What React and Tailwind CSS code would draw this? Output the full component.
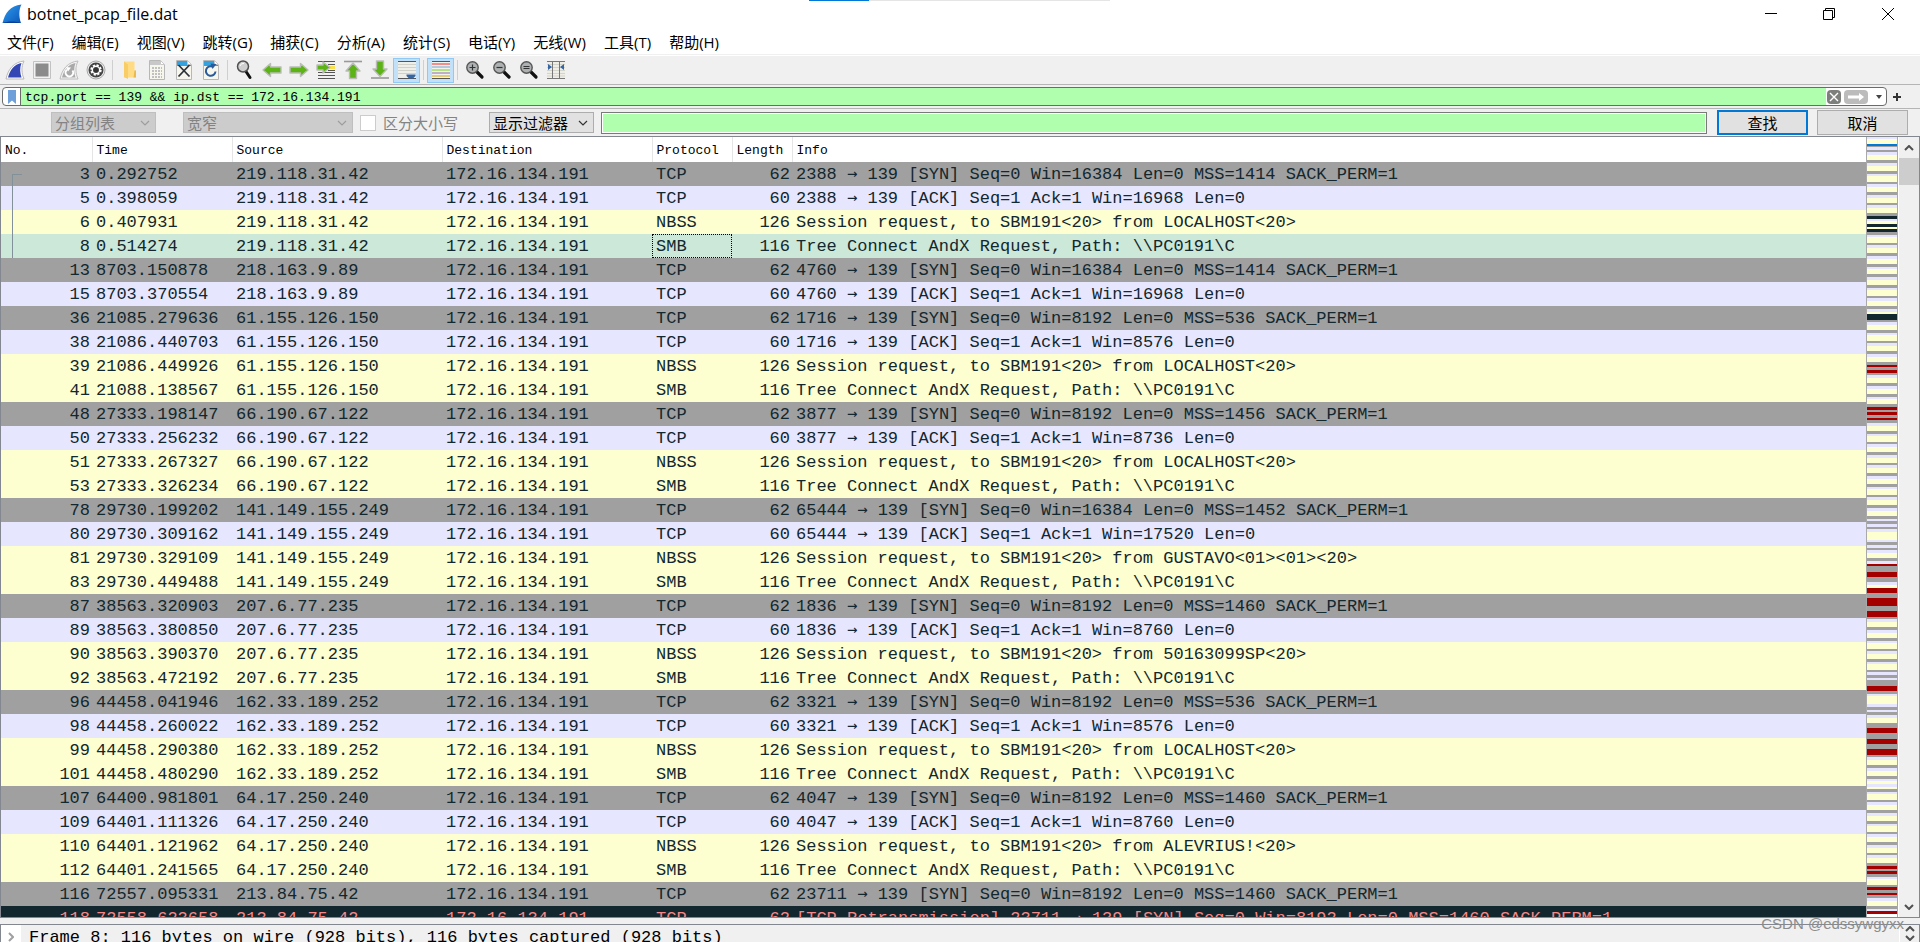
import React from 'react';
import clsx from 'clsx';

const MENUS = ['文件(F)', '编辑(E)', '视图(V)', '跳转(G)', '捕获(C)', '分析(A)', '统计(S)', '电话(Y)', '无线(W)', '工具(T)', '帮助(H)'];

const ROW_STYLES = {
  syn: 'bg-[#a0a0a0] text-[#12272e]',
  ack: 'bg-[#e7e6ff] text-[#12272e]',
  smb: 'bg-[#feffd0] text-[#12272e]',
  selected: 'bg-[#cce8d9] text-[#12272e]',
  bad: 'bg-[#12272e] text-[#f78787]',
};

const LOCALHOST = 'Session request, to SBM191<20> from LOCALHOST<20>';
const TREE = 'Tree Connect AndX Request, Path: \\\\PC0191\\C';

// [no, time, source, protocol, length, info, row style]
const PACKETS = [
  [3, '0.292752', '219.118.31.42', 'TCP', 62, '2388 → 139 [SYN] Seq=0 Win=16384 Len=0 MSS=1414 SACK_PERM=1', 'syn'],
  [5, '0.398059', '219.118.31.42', 'TCP', 60, '2388 → 139 [ACK] Seq=1 Ack=1 Win=16968 Len=0', 'ack'],
  [6, '0.407931', '219.118.31.42', 'NBSS', 126, LOCALHOST, 'smb'],
  [8, '0.514274', '219.118.31.42', 'SMB', 116, TREE, 'selected'],
  [13, '8703.150878', '218.163.9.89', 'TCP', 62, '4760 → 139 [SYN] Seq=0 Win=16384 Len=0 MSS=1414 SACK_PERM=1', 'syn'],
  [15, '8703.370554', '218.163.9.89', 'TCP', 60, '4760 → 139 [ACK] Seq=1 Ack=1 Win=16968 Len=0', 'ack'],
  [36, '21085.279636', '61.155.126.150', 'TCP', 62, '1716 → 139 [SYN] Seq=0 Win=8192 Len=0 MSS=536 SACK_PERM=1', 'syn'],
  [38, '21086.440703', '61.155.126.150', 'TCP', 60, '1716 → 139 [ACK] Seq=1 Ack=1 Win=8576 Len=0', 'ack'],
  [39, '21086.449926', '61.155.126.150', 'NBSS', 126, LOCALHOST, 'smb'],
  [41, '21088.138567', '61.155.126.150', 'SMB', 116, TREE, 'smb'],
  [48, '27333.198147', '66.190.67.122', 'TCP', 62, '3877 → 139 [SYN] Seq=0 Win=8192 Len=0 MSS=1456 SACK_PERM=1', 'syn'],
  [50, '27333.256232', '66.190.67.122', 'TCP', 60, '3877 → 139 [ACK] Seq=1 Ack=1 Win=8736 Len=0', 'ack'],
  [51, '27333.267327', '66.190.67.122', 'NBSS', 126, LOCALHOST, 'smb'],
  [53, '27333.326234', '66.190.67.122', 'SMB', 116, TREE, 'smb'],
  [78, '29730.199202', '141.149.155.249', 'TCP', 62, '65444 → 139 [SYN] Seq=0 Win=16384 Len=0 MSS=1452 SACK_PERM=1', 'syn'],
  [80, '29730.309162', '141.149.155.249', 'TCP', 60, '65444 → 139 [ACK] Seq=1 Ack=1 Win=17520 Len=0', 'ack'],
  [81, '29730.329109', '141.149.155.249', 'NBSS', 126, 'Session request, to SBM191<20> from GUSTAVO<01><01><20>', 'smb'],
  [83, '29730.449488', '141.149.155.249', 'SMB', 116, TREE, 'smb'],
  [87, '38563.320903', '207.6.77.235', 'TCP', 62, '1836 → 139 [SYN] Seq=0 Win=8192 Len=0 MSS=1460 SACK_PERM=1', 'syn'],
  [89, '38563.380850', '207.6.77.235', 'TCP', 60, '1836 → 139 [ACK] Seq=1 Ack=1 Win=8760 Len=0', 'ack'],
  [90, '38563.390370', '207.6.77.235', 'NBSS', 126, 'Session request, to SBM191<20> from 50163099SP<20>', 'smb'],
  [92, '38563.472192', '207.6.77.235', 'SMB', 116, TREE, 'smb'],
  [96, '44458.041946', '162.33.189.252', 'TCP', 62, '3321 → 139 [SYN] Seq=0 Win=8192 Len=0 MSS=536 SACK_PERM=1', 'syn'],
  [98, '44458.260022', '162.33.189.252', 'TCP', 60, '3321 → 139 [ACK] Seq=1 Ack=1 Win=8576 Len=0', 'ack'],
  [99, '44458.290380', '162.33.189.252', 'NBSS', 126, LOCALHOST, 'smb'],
  [101, '44458.480290', '162.33.189.252', 'SMB', 116, TREE, 'smb'],
  [107, '64400.981801', '64.17.250.240', 'TCP', 62, '4047 → 139 [SYN] Seq=0 Win=8192 Len=0 MSS=1460 SACK_PERM=1', 'syn'],
  [109, '64401.111326', '64.17.250.240', 'TCP', 60, '4047 → 139 [ACK] Seq=1 Ack=1 Win=8760 Len=0', 'ack'],
  [110, '64401.121962', '64.17.250.240', 'NBSS', 126, 'Session request, to SBM191<20> from ALEVRIUS!<20>', 'smb'],
  [112, '64401.241565', '64.17.250.240', 'SMB', 116, TREE, 'smb'],
  [116, '72557.095331', '213.84.75.42', 'TCP', 62, '23711 → 139 [SYN] Seq=0 Win=8192 Len=0 MSS=1460 SACK_PERM=1', 'syn'],
  [118, '72558.623658', '213.84.75.42', 'TCP', 62, '[TCP Retransmission] 23711 → 139 [SYN] Seq=0 Win=8192 Len=0 MSS=1460 SACK_PERM=1', 'bad'],
];

const COLUMNS = ['No.', 'Time', 'Source', 'Destination', 'Protocol', 'Length', 'Info'];

// Colour letter + height in pixels, top to bottom
const MINIMAP = (
  'L2 Y5 B2 G1 L3 G2 L3 Y5 G3 L3 Y5 G3 L2 Y6 G2 L3 Y5 G3 L3 Y5 G2 L3 Y5 G3 D3 L2 Y3 D3 Y2 D3 G3 L2 Y6 G2 L3 Y5 G3 L3 Y5 G3 L2 Y5 G3 L3 Y5 G3 ' +
  'L2 Y6 G2 L3 Y5 G3 L3 Y2 D6 G2 L3 Y5 G3 L2 Y6 G2 L3 Y5 G3 L3 Y5 G3 R2 G3 R3 G2 L3 Y5 G3 L3 Y5 G3 L2 Y5 G3 R3 G2 R3 G3 R2 G3 L3 Y5 G3 L2 Y6 G2 ' +
  'L3 Y5 G3 L3 Y5 G2 L3 Y5 G3 L3 Y5 G3 L2 Y6 G2 L3 Y5 G3 L3 Y5 G3 L2 G3 L3 G2 L3 Y8 L2 G3 L3 G2 L3 Y5 G3 L3 R2 G6 R5 G5 L3 Y3 R5 G5 R8 G5 R6 G2 ' +
  'L3 Y5 G3 L3 Y5 G3 L2 Y6 G2 L3 Y5 G3 L2 Y6 G2 L3 G3 L2 G6 R5 G3 L2 Y8 L3 G3 L2 G3 L3 Y5 G5 R5 G6 R5 G5 R6 G2 L3 Y5 G3 L3 Y5 G3 L2 Y3 L3 Y2 G3 ' +
  'L2 Y6 G2 L3 Y5 G3 L3 Y5 G3 L2 Y6 G2 L3 Y5 G3 L3 Y5 G2 L3 Y5 G3 R3 G2 R3 G3 L2 Y6 G2 R3 G3 R2 G3 L3 Y5 G3 L2 R3 W3'
).split(' ');

const MAP_COLORS = {
  L: 'bg-[#e7e6ff]',
  Y: 'bg-[#feffd0]',
  G: 'bg-[#a0a0a0]',
  B: 'bg-[#0078d7]',
  D: 'bg-[#12272e]',
  R: 'bg-[#a40000]',
  W: 'bg-white',
};

/* ---------- icons ---------- */

const Svg = ({ children, size = 20 }) => (
  <svg width={size} height={size} viewBox="0 0 20 20" fill="none" aria-hidden="true">{children}</svg>
);

const AppLogo = () => (
  <Svg>
    <defs>
      <linearGradient id="logo" x1="0" y1="0" x2="1" y2="1">
        <stop offset="0" stopColor="#2f9df0" />
        <stop offset="1" stopColor="#0b56b8" />
      </linearGradient>
    </defs>
    <path d="M.5 19C3 9 8 1.500 19.500.5C17 5 16.500 12 19 19Z" fill="url(#logo)" />
    <path d="M.5 19C6 17 13 17 19 19Z" fill="#0a3f94" />
  </Svg>
);

const FinIcon = () => (
  <Svg>
    <path d="M1 19C3 9 9 2 19 1C16 7 16.500 13 19 19Z" fill="#fff" stroke="#b9b9b9" />
    <path d="M3 17.500C5 10 9 4.500 16.500 3C14.500 8 15 13 16.500 17.500Z" fill="#3346b4" />
  </Svg>
);

const StopIcon = () => (
  <Svg>
    <path d="M1.500 1.500h17v17h-17z" fill="#f2f2f2" stroke="#c2c2c2" />
    <path d="M3.500 3.500h13v13h-13z" fill="#8b8b8b" />
  </Svg>
);

const RestartIcon = () => (
  <Svg>
    <path d="M1 19C3 9 9 2 19 1C16 7 16.500 13 19 19Z" fill="#f4f4f4" stroke="#bcbcbc" />
    <path d="M3 17.500C5 10 9 4.500 16.500 3C14.500 8 15 13 16.500 17.500Z" fill="#a9a9a9" />
    <path d="M13.500 10.500a3.800 3.800 0 1 1-5.500-.8" stroke="#fff" strokeWidth="2" />
    <path d="M7 7l5 .5-3 4z" fill="#fff" />
  </Svg>
);

const OptionsIcon = () => (
  <Svg>
    <circle cx="10" cy="10" r="9" fill="#e9e9e9" stroke="#a9a9a9" />
    <circle cx="10" cy="10" r="7.500" fill="#444" />
    <circle cx="10" cy="10" r="4.800" stroke="#fff" strokeWidth="1.800" strokeDasharray="2.200 1.570" />
    <circle cx="10" cy="10" r="3.700" stroke="#fff" strokeWidth="1.400" />
    <circle cx="10" cy="10" r="2.200" fill="#333" />
  </Svg>
);

const FolderIcon = () => (
  <Svg>
    <path d="M4 1.500h10.500v9H16v7H4z" fill="#ffdc83" />
    <path d="M4 1.500l4 3V19l-4-2z" fill="#f8cd66" />
    <path d="M14.500 10.500H16v7h-2.500z" fill="#eab94b" />
  </Svg>
);

const Page = ({ gray, children }) => (
  <Svg>
    <path d="M2.500.5h11l4 4v15h-15z" fill="#f7f6ec" stroke="#b7b7b7" />
    {!gray && <path d="M3 1h10.500L17 4.500V6H3z" fill="#35a2dd" />}
    <path d="M13.500.5v4h4z" fill="#fff" stroke="#c9c9c9" />
    {children}
  </Svg>
);

const SaveIcon = () => (
  <Page gray>
    <path d="M3 1h10v4H3z" fill="#c8c8c8" />
    <path d="M5 8h10M5 11h10M5 14h10M5 17h10" stroke="#c0c0c0" strokeWidth="2" strokeDasharray="2 1" />
  </Page>
);
const CloseFileIcon = () => (
  <Page>
    <path d="M4.500 5l11 11.500M15.500 5l-11 11.500" stroke="#2c333a" strokeWidth="1.800" />
  </Page>
);
const ReloadIcon = () => (
  <Page>
    <path d="M14.500 11.500a4.800 4.800 0 1 1-3-5" stroke="#285a9c" strokeWidth="2" />
    <path d="M9.500 3.500l6 .5-4 5z" fill="#285a9c" />
  </Page>
);

const Lens = ({ children, fill = '#aeb1b2' }) => (
  <Svg>
    <path d="M11.500 11.500l5.500 5.500" stroke="#111" strokeWidth="3.200" strokeLinecap="round" />
    <circle cx="7.500" cy="7.500" r="5.700" fill={fill} stroke="#555" strokeWidth="1.400" />
    {children}
  </Svg>
);
const FindIcon = () => (
  <Svg>
    <path d="M11 11.500l4 6" stroke="#111" strokeWidth="3" strokeLinecap="round" />
    <circle cx="8" cy="6.500" r="5.500" fill="#cfcfcf" stroke="#505050" strokeWidth="1.500" />
    <path d="M5 6a3.500 3.500 0 0 1 4-2.500" stroke="#fff" />
  </Svg>
);

const GREEN = { fill: '#5cb316', stroke: '#b9bdb5', strokeWidth: 1.4, strokeLinejoin: 'round' };

const BackIcon = () => <Svg><path d="M1 10L8.500 3.500V7H19v6H8.500v3.500z" {...GREEN} /></Svg>;
const ForwardIcon = () => <Svg><path d="M19 10l-7.500-6.500V7H1v6h10.500v3.500z" {...GREEN} /></Svg>;
const GotoIcon = () => (
  <Svg>
    <path d="M2 1.500h17M2 12.500h17M2 15.500h17M2 18.500h17M12 4.500h7M12 10.500h7" stroke="#555" />
    <path d="M13 6h6v3h-6z" fill="#f8e04a" />
    <path d="M1 5h6V2l7 5.500L7 13v-3H1z" {...GREEN} />
  </Svg>
);
const FirstIcon = () => (
  <Svg>
    <path d="M1 1.500h18" stroke="#999" strokeWidth="1.600" />
    <path d="M10 3l7 8h-3.500v7.500h-7V11H3z" {...GREEN} />
  </Svg>
);
const LastIcon = () => (
  <Svg>
    <path d="M1 18h18" stroke="#999" strokeWidth="1.600" />
    <path d="M10 16.500l7-7.500h-3.500V1h-7v8H3z" {...GREEN} />
  </Svg>
);
const AutoScrollIcon = () => (
  <Svg>
    <path d="M1 1h18v18H1z" fill="#eeefe9" />
    <path d="M1 1.500h18M1 18.500h18" stroke="#555" />
    <path d="M1 4.500h18M1 7.500h18M1 10.500h18M1 13.500h18" stroke="#d0d1c8" />
    <path d="M9.500 14.500h9v1.500l-2.500 2.500h-4L9.500 16z" fill="#3465a4" />
  </Svg>
);
const ColorizeIcon = () => (
  <Svg>
    <path d="M1 1h18v18H1z" fill="#f3f3ee" />
    <path d="M1 1.500h18M1 18.500h18" stroke="#555" />
    <path d="M1 4h18" stroke="#ef2929" />
    <path d="M1 7h18" stroke="#729fcf" />
    <path d="M1 10h18" stroke="#73d216" />
    <path d="M1 13h18" stroke="#8e6a9c" />
    <path d="M1 16h18" stroke="#d9a400" />
  </Svg>
);
const ZoomInIcon = () => <Lens><path d="M4.500 7.500h6M7.500 4.500v6" stroke="#333" strokeWidth="1.200" /></Lens>;
const ZoomOutIcon = () => <Lens><path d="M4.500 7.500h6" stroke="#333" strokeWidth="1.200" /></Lens>;
const ZoomResetIcon = () => <Lens><path d="M4.500 6.500h6M4.500 8.500h6" stroke="#333" strokeWidth="1.200" /></Lens>;
const ResizeIcon = () => (
  <Svg>
    <path d="M1 1h18v18H1z" fill="#eeeee6" />
    <path d="M1 1.500h18M1 18.500h18" stroke="#777" />
    <path d="M1 4.500h18M1 7.500h18M1 10.500h18M1 13.500h18M1 16h18" stroke="#d3d4cc" />
    <path d="M6.500 1v18M13.500 1v18" stroke="#777" />
    <path d="M2 4l4 3-4 3zM18 4l-4 3 4 3z" fill="#3465a4" />
  </Svg>
);

const Chevron = ({ className, up, bold }) => (
  <svg width="10" height="6" viewBox="0 0 10 6" fill="none" className={className} aria-hidden="true">
    <path d={up ? 'M1 5l4-4 4 4' : 'M1 1l4 4 4-4'} stroke="currentColor" strokeWidth={bold ? 2 : 1.2} />
  </svg>
);

/* ---------- parts ---------- */

const TOOL_GROUPS = [
  [['开始捕获', FinIcon], ['停止捕获', StopIcon], ['重新开始', RestartIcon], ['捕获选项', OptionsIcon]],
  [['打开', FolderIcon], ['保存', SaveIcon], ['关闭文件', CloseFileIcon], ['重新加载', ReloadIcon]],
  [['查找分组', FindIcon], ['上一分组', BackIcon], ['下一分组', ForwardIcon], ['转到分组', GotoIcon], ['首个分组', FirstIcon], ['最新分组', LastIcon], ['自动滚动', AutoScrollIcon, true]],
  [['着色', ColorizeIcon, true]],
  [['放大', ZoomInIcon], ['缩小', ZoomOutIcon], ['原始大小', ZoomResetIcon], ['调整列宽', ResizeIcon]],
];

const TitleBar = () => (
  <header className="flex h-7 items-center justify-between bg-white">
    <div className="flex items-center gap-[5px] pl-0.5">
      <AppLogo />
      <h1 className="font-['Open_Sans',sans-serif] text-base leading-7 text-black">botnet_pcap_file.dat</h1>
    </div>
    <div className="flex pr-0.5 text-black">
      <button aria-label="最小化" className="flex h-7 w-[58px] items-center justify-center">
        <svg width="12" height="12" viewBox="0 0 12 12"><path d="M0 5.500h12" stroke="#000" /></svg>
      </button>
      <button aria-label="还原" className="flex h-7 w-[58px] items-center justify-center">
        <svg width="12" height="12" viewBox="0 0 12 12" fill="none"><path d="M.5 2.500h9v9h-9zM2.500 2.500v-2h9v9h-2" stroke="#000" /></svg>
      </button>
      <button aria-label="关闭" className="flex h-7 w-[60px] items-center justify-center">
        <svg width="12" height="12" viewBox="0 0 12 12" fill="none"><path d="M0 0l12 12M12 0L0 12" stroke="#000" /></svg>
      </button>
    </div>
  </header>
);

const MenuBar = () => (
  <nav className="flex h-7 gap-[18px] border-b border-white bg-white pl-[7px] font-['Open_Sans','Noto_Sans_CJK_SC',sans-serif] text-[15px] leading-7 text-black shadow-[inset_0_-1px_#f0f0f0]">
    {MENUS.map((menu) => (
      <button key={menu} className="whitespace-nowrap">{menu}</button>
    ))}
  </nav>
);

const ToolBar = () => (
  <div className="flex h-[29px] items-center border-b border-[#b5b5b5] bg-[#f0f0f0] pl-px">
    {TOOL_GROUPS.map((group, i) => (
      <React.Fragment key={i}>
        {i > 0 && <div className="mx-[3px] h-5 w-px bg-[#cfcfcf]" />}
        {group.map(([label, Icon, active]) => (
          <button
            key={label}
            aria-label={label}
            className={clsx('flex h-[25px] w-[27px] items-center justify-center', active && 'border border-[#90c8f6] bg-[#c2e0f7]')}
          >
            <Icon />
          </button>
        ))}
      </React.Fragment>
    ))}
  </div>
);

const FilterBar = () => (
  <div className="flex h-6 items-center border-b border-[#b5b5b5] bg-[#f0f0f0] pl-0.5">
    <div className="flex h-[19px] flex-1 items-center overflow-hidden rounded border border-[#6b6b6b] bg-white">
      <button aria-label="书签" className="flex h-full w-[18px] items-center justify-center border-r border-[#6b6b6b]">
        <svg width="8" height="14" viewBox="0 0 8 14"><path d="M0 0h8v14L4 10.500 0 14z" fill="#6f9fd8" /></svg>
      </button>
      <input
        aria-label="显示过滤器"
        defaultValue="tcp.port == 139 && ip.dst == 172.16.134.191"
        className="h-full min-w-0 flex-1 bg-[#afffaf] pt-0.5 pl-1 font-['Liberation_Mono',monospace] text-[13px] text-black outline-none"
      />
      <button aria-label="清除" className="ml-px flex h-[14px] w-[14px] items-center justify-center rounded-sm bg-[#7c7f7c]">
        <svg width="10" height="10" viewBox="0 0 10 10"><path d="M1 1l8 8M9 1L1 9" stroke="#fff" strokeWidth="1.400" /></svg>
      </button>
      <button aria-label="应用" className="ml-[3px] flex h-[14px] w-6 items-center justify-center rounded-sm bg-[#bcbcbc]">
        <svg width="16" height="8" viewBox="0 0 16 8"><path d="M0 2.500h11V0l5 4-5 4V5.500H0z" fill="#fff" /></svg>
      </button>
      <button aria-label="历史" className="flex h-full w-[18px] items-center justify-center pl-1">
        <svg width="6" height="4" viewBox="0 0 6 4"><path d="M0 0h6L3 4z" fill="#444" /></svg>
      </button>
    </div>
    <button aria-label="添加" className="flex w-[33px] pl-1.5">
      <svg width="8" height="8" viewBox="0 0 8 8"><path d="M0 4h8M4 0v8" stroke="#333" strokeWidth="2" /></svg>
    </button>
  </div>
);

const Combo = ({ label, value, width, disabled }) => (
  <div className={clsx('relative', width)}>
    <select
      aria-label={label}
      disabled={disabled}
      className={clsx(
        'h-[21px] w-full appearance-none border pl-[3px] text-[15px] leading-[19px] opacity-100',
        disabled ? 'border-[#bfbfbf] bg-[#cccccc] text-[#838383]' : 'border-[#adadad] bg-[#e1e1e1] text-black'
      )}
    >
      <option>{value}</option>
    </select>
    <Chevron className={clsx('pointer-events-none absolute top-2 right-1.5', disabled ? 'text-[#9d9d9d]' : 'text-[#333]')} />
  </div>
);

const SearchBar = () => (
  <div className="flex h-7 items-center border-b border-[#828790] bg-[#f0f0f0] pr-3 pl-[51px] font-['Noto_Sans_CJK_SC',sans-serif] text-[15px] leading-5">
    <Combo label="查找范围" value="分组列表" width="w-[105px]" disabled />
    <div className="w-[27px]" />
    <Combo label="字符宽度" value="宽窄" width="w-[170px]" disabled />
    <label className="ml-[7px] flex w-[129px] items-center gap-[7px] text-[#838383]">
      <input type="checkbox" disabled className="h-4 w-4 appearance-none border border-[#cccccc] bg-white" />
      区分大小写
    </label>
    <Combo label="查找类型" value="显示过滤器" width="w-[105px]" />
    <input aria-label="查找内容" className="ml-[7px] h-[22px] min-w-0 flex-1 border border-[#7a7a7a] bg-[#afffaf] outline outline-1 -outline-offset-2 outline-white" />
    <button className="ml-2.5 h-[25px] w-[91px] border-2 border-[#0078d7] bg-[#e1e1e1] text-black">查找</button>
    <button className="ml-[9px] h-[25px] w-[91px] border border-[#adadad] bg-[#e1e1e1] text-black">取消</button>
  </div>
);

// Bracket that links the packets of the selected conversation
const Thread = ({ index }) => {
  if (index > 3) return null;
  return index === 0
    ? <span className="absolute top-3 left-[11px] h-3 w-2.5 border-t border-l border-[#82909a]" />
    : <span className="absolute top-0 left-[11px] h-6 border-l border-[#82909a]" />;
};

// The port arrow is drawn from DejaVu, its head is larger there
const Info = ({ text }) => {
  const [before, after] = text.split('→');
  if (!after) return text;
  return <>{before}<span className="font-['DejaVu_Sans_Mono',monospace] leading-none">→</span>{after}</>;
};

const PacketTable = () => (
  <table className="w-full table-fixed border-collapse">
    <colgroup>
      <col className="w-[91px]" />
      <col className="w-[140px]" />
      <col className="w-[210px]" />
      <col className="w-[210px]" />
      <col className="w-[80px]" />
      <col className="w-[60px]" />
      <col />
    </colgroup>
    <thead>
      <tr className="h-[25px] bg-white font-['Liberation_Mono',monospace] text-[13px] leading-5 text-black">
        {COLUMNS.map((column) => (
          <th key={column} className="border-l border-[#e5e5e5] p-0 pt-0.5 pl-1 text-left font-normal first:border-l-0">{column}</th>
        ))}
      </tr>
    </thead>
    <tbody className="font-['Liberation_Mono',monospace] text-[17px] leading-[22px]">
      {PACKETS.map(([no, time, source, protocol, length, info, style], i) => (
        <tr key={no} className={clsx('h-6 whitespace-pre', ROW_STYLES[style])}>
          <td className="relative p-0 pt-0.5 pr-0.5 text-right"><Thread index={i} />{no}</td>
          <td className="p-0 pt-0.5 pl-1">{time}</td>
          <td className="p-0 pt-0.5 pl-1">{source}</td>
          <td className="p-0 pt-0.5 pl-1">172.16.134.191</td>
          <td className={clsx('p-0 pt-0.5 pl-1', style === 'selected' && 'outline-1 -outline-offset-1 outline-dotted outline-black')}>{protocol}</td>
          <td className="p-0 pt-0.5 pr-0.5 text-right">{length}</td>
          <td className="p-0 pt-0.5 pl-1"><Info text={info} /></td>
        </tr>
      ))}
    </tbody>
  </table>
);

const Minimap = () => (
  <div className="w-8 shrink-0 border-x border-[#a9a9a9]">
    {MINIMAP.map((band, i) => (
      <div key={i} className={MAP_COLORS[band[0]]} style={{ height: Number(band.slice(1)) }} />
    ))}
  </div>
);

const ScrollBar = () => (
  <div className="ml-px flex w-5 shrink-0 flex-col items-center bg-[#f0f0f0] text-[#505050]">
    <button aria-label="向上滚动" className="flex h-[21px] w-full items-center justify-center"><Chevron up bold /></button>
    <div className="h-[27px] w-full bg-[#cdcdcd]" />
    <div className="flex-1" />
    <button aria-label="向下滚动" className="flex h-[21px] w-full items-center justify-center"><Chevron bold /></button>
  </div>
);

export default function App() {
  return (
    <div className="relative flex h-screen flex-col overflow-hidden bg-[#f0f0f0]">
      <div className="absolute top-0 left-[809px] flex h-px w-[301px] bg-[#e5e5e5]">
        <div className="w-[60px] bg-[#0078d7]" />
      </div>
      <TitleBar />
      <MenuBar />
      <ToolBar />
      <FilterBar />
      <SearchBar />

      <main className="flex min-h-0 flex-1 border-x border-b border-[#828790] bg-white">
        <div className="min-w-0 flex-1 overflow-hidden">
          <PacketTable />
        </div>
        <Minimap />
        <ScrollBar />
      </main>

      {/* Packet details, only the first line is visible */}
      <section className="mt-1.5 flex h-[18px] shrink-0 items-start overflow-hidden border-x border-t border-[#828790]">
        <button aria-label="展开" className="flex h-6 w-5 items-center justify-center bg-white text-[#a0a0a0]">
          <Chevron bold className="-rotate-90" />
        </button>
        <p className="flex-1 pt-0.5 pl-2 font-['Liberation_Mono',monospace] text-[17px] leading-[22px] whitespace-pre text-black">
          Frame 8: 116 bytes on wire (928 bits), 116 bytes captured (928 bits)
        </p>
        <div className="flex h-full w-5 flex-col items-center justify-around border-l border-white text-[#505050]">
          <Chevron up bold />
          <Chevron bold />
        </div>
      </section>

      <span className="absolute right-4 bottom-1.5 font-['Liberation_Sans',sans-serif] text-[15px] leading-6 text-[#8c8c8c]">CSDN @edssywgyxx</span>
    </div>
  );
}
